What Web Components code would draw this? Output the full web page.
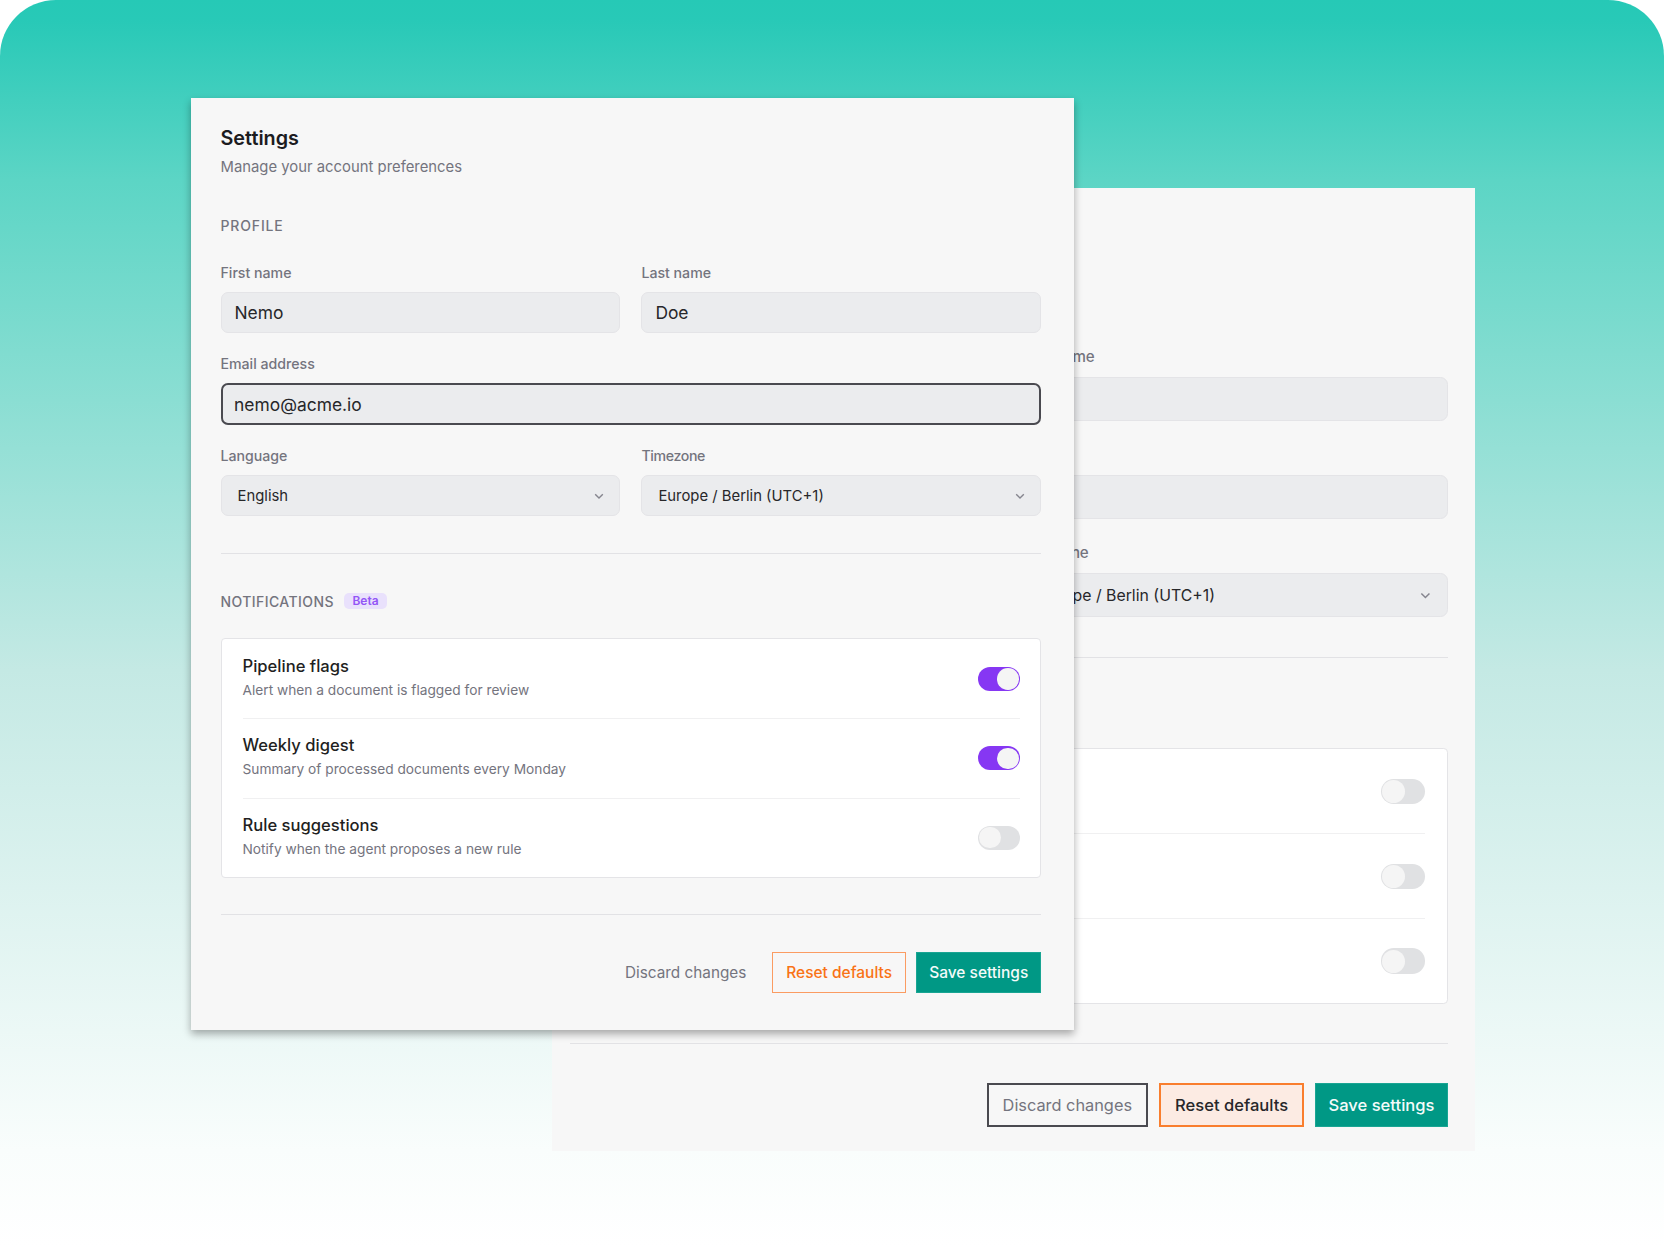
<!DOCTYPE html>
<html lang="en">
<head>
<meta charset="utf-8">
<title>Settings</title>
<style>
  html, body { margin: 0; background: #fff; }
</style>
</head>
<body>
<app-stage></app-stage>

<script>
// shared by every shadow root: --u scales the back panel, same form but larger
const BASE = `
  *, :host { box-sizing: border-box; }
  :host { font-family: Inter, "Liberation Sans", sans-serif; }
`;

class FormField extends HTMLElement {
  connectedCallback() {
    const wide = this.hasAttribute('wide');
    const select = this.hasAttribute('select');
    const focused = this.hasAttribute('focused');
    this.attachShadow({ mode: 'open' });
    this.shadowRoot.innerHTML = `
      <style>
        ${BASE}
        :host { display: block; ${wide ? 'grid-column: 1 / -1;' : ''} }
        :host([tight]) .label { letter-spacing: -.025em; }
        .label {
          height: calc(20px * var(--u));
          line-height: calc(20.7px * var(--u));
          margin-bottom: calc(9px * var(--u));
          font-size: calc(14.15px * var(--u));
          font-weight: 500;
          color: #74747e;
        }
        .box {
          height: calc(41.3px * var(--u));
          display: flex;
          align-items: center;
          justify-content: space-between;
          background: #ebecee;
          border: 1px solid #e4e4e7;
          border-radius: calc(7px * var(--u));
          padding: 0 calc(13px * var(--u));
          color: #27272a;
          font-size: calc(17.4px * var(--u));
        }
        .box.select {
          padding: calc(1px * var(--u)) calc(14.5px * var(--u)) 0 calc(16px * var(--u));
          font-size: calc(14.85px * var(--u));
        }
        .box.focused { border: 2px solid #4a4a50; padding: calc(1px * var(--u)) calc(11.6px * var(--u)) 0; }
        svg { width: calc(12px * var(--u)); height: calc(12px * var(--u)); flex: none; }
      </style>
      <div class="label">${this.getAttribute('label') || ''}</div>
      <div class="box ${select ? 'select' : ''} ${focused ? 'focused' : ''}">
        <span>${this.getAttribute('value') || ''}</span>
        ${select ? '<svg viewBox="0 0 12 12" fill="none" stroke="#85858e" stroke-width="1.4"><path d="M2.2 4.2 6 8l3.8-3.8"/></svg>' : ''}
      </div>
    `;
  }
}

class ToggleSwitch extends HTMLElement {
  connectedCallback() {
    const on = this.hasAttribute('on');
    this.attachShadow({ mode: 'open' });
    this.shadowRoot.innerHTML = `
      <style>
        ${BASE}
        :host { display: block; flex: none; }
        .track {
          width: calc(42px * var(--u));
          height: calc(24px * var(--u));
          border-radius: calc(12px * var(--u));
          padding: calc(1.2px * var(--u));
          display: flex;
          justify-content: ${on ? 'flex-end' : 'flex-start'};
          background: ${on ? '#8637f3' : '#e0e1e3'};
        }
        .knob {
          width: calc(21.6px * var(--u));
          height: calc(21.6px * var(--u));
          border-radius: 50%;
          background: #f5f5f5;
        }
      </style>
      <div class="track"><div class="knob"></div></div>
    `;
  }
}

class ToggleRow extends HTMLElement {
  connectedCallback() {
    this.attachShadow({ mode: 'open' });
    this.shadowRoot.innerHTML = `
      <style>
        ${BASE}
        :host {
          display: flex;
          align-items: center;
          justify-content: space-between;
          height: calc(79.6px * var(--u));
          border-bottom: calc(1.3px * var(--u)) solid #f0f0f1;
        }
        :host(:last-child) { border-bottom: 0; height: calc(78px * var(--u)); }
        .copy { margin-top: calc(-2px * var(--u)); }
        .title {
          height: calc(21px * var(--u));
          line-height: calc(21px * var(--u));
          margin-bottom: calc(3px * var(--u));
          font-size: calc(16.6px * var(--u));
          font-weight: 500;
          color: #1f1f22;
        }
        .hint {
          height: calc(20px * var(--u));
          line-height: calc(20px * var(--u));
          font-size: calc(13.72px * var(--u));
          color: #74747e;
        }
      </style>
      <div class="copy">
        <div class="title">${this.getAttribute('heading') || ''}</div>
        <div class="hint">${this.getAttribute('hint') || ''}</div>
      </div>
      <slot></slot>
    `;
  }
}

class ActionButton extends HTMLElement {
  connectedCallback() {
    this.attachShadow({ mode: 'open' });
    this.shadowRoot.innerHTML = `
      <style>
        ${BASE}
        :host {
          display: flex;
          align-items: center;
          height: calc(41.3px * var(--u));
          padding: 0 calc(11.7px * var(--u));
          border: 1px solid transparent;
          font-size: calc(15.5px * var(--u));
          font-weight: 500;
        }
        :host([kind="ghost"]) { color: #74747e; font-size: calc(15.3px * var(--u)); font-weight: 400; padding: 0 calc(14.5px * var(--u)); }
        :host([kind="outline"]) { color: #f97316; border-color: #fb9c62; padding: 0 calc(12.8px * var(--u)); }
        :host([kind="primary"]) { color: #f4fbfa; background: #009885; border-color: #19a593; }
        :host([kind="ghost-hover"]) { color: #74747e; font-size: calc(15.3px * var(--u)); font-weight: 400; border: 2px solid #4a4a50; padding: 0 calc(13.2px * var(--u)); }
        :host([kind="outline-hover"]) { color: #27272a; background: #fcebe3; border: 2px solid #f97e2e; padding: 0 calc(12.8px * var(--u)); }
      </style>
      <slot></slot>
    `;
  }
}

class SettingsPanel extends HTMLElement {
  connectedCallback() {
    const back = this.getAttribute('variant') === 'back';
    // the back panel's left part lies under the front one: only what shows gets text
    const shown = (text) => (back ? '' : text);
    this.attachShadow({ mode: 'open' });
    this.shadowRoot.innerHTML = `
      <style>
        ${BASE}
        :host {
          display: flex;
          flex-direction: column;
          background: #f7f7f7;
          --u: 1;
          padding: 28.2px 33px 37.2px 30px;
        }
        :host([variant="back"]) {
          --u: 1.068;
          padding: 12.4px 26.6px 23.5px 18px;
        }
        :host([variant="front"]) {
          box-shadow: 0 4px 8px rgba(0, 0, 0, .33);
        }
        h1 {
          margin: 0;
          height: calc(24px * var(--u));
          line-height: calc(24px * var(--u));
          font-size: calc(19.8px * var(--u));
          font-weight: 600;
          color: #1c1c1f;
        }
        .sub {
          margin-top: calc(6.6px * var(--u));
          height: calc(20px * var(--u));
          line-height: calc(20px * var(--u));
          font-size: calc(14.85px * var(--u));
          color: #74747e;
        }
        .section {
          display: flex;
          align-items: center;
          gap: calc(10px * var(--u));
          height: calc(20px * var(--u));
          font-size: calc(14px * var(--u));
          font-weight: 500;
          letter-spacing: .03em;
          color: #74747e;
        }
        .profile {
          margin-top: calc(39.4px * var(--u));
          margin-bottom: calc(26.7px * var(--u));
          letter-spacing: .06em;
        }
        .grid {
          display: grid;
          grid-template-columns: 1fr 1fr;
          column-gap: calc(21.3px * var(--u));
          row-gap: calc(21.3px * var(--u));
        }
        hr {
          width: 100%;
          margin: calc(37px * var(--u)) 0;
          border: 0;
          border-top: calc(1.3px * var(--u)) solid #e2e2e5;
        }
        hr.last { margin: calc(36.4px * var(--u)) 0 calc(36.8px * var(--u)); }
        :host([variant="back"]) hr:not(.last) { margin-top: 40.6px; }
        .badge {
          padding: 0 calc(8.5px * var(--u));
          height: calc(16.6px * var(--u));
          line-height: calc(16.6px * var(--u));
          border-radius: calc(5px * var(--u));
          background: #e9e1fc;
          color: #9356f6;
          font-size: calc(12px * var(--u));
          font-weight: 600;
          letter-spacing: 0;
        }
        .card {
          margin-top: calc(27.3px * var(--u));
          background: #fff;
          border: calc(1.3px * var(--u)) solid #e4e4e7;
          border-radius: calc(4px * var(--u));
          padding: 0 calc(20.2px * var(--u)) 0 calc(21px * var(--u));
        }
        .actions {
          display: flex;
          justify-content: flex-end;
          gap: calc(10.6px * var(--u));
        }
      </style>
      <h1>${shown('Settings')}</h1>
      <div class="sub">${shown('Manage your account preferences')}</div>
      <div class="section profile">${shown('PROFILE')}</div>
      <div class="grid">
        <form-field label="${shown('First name')}" value="${shown('Nemo')}"></form-field>
        <form-field label="Last name" value="${shown('Doe')}"></form-field>
        <form-field wide label="${shown('Email address')}" value="${shown('nemo@acme.io')}" ${back ? '' : 'focused'}></form-field>
        <form-field select label="${shown('Language')}" value="${shown('English')}"></form-field>
        <form-field select tight label="Timezone" value="Europe / Berlin (UTC+1)"></form-field>
      </div>
      <hr>
      <div class="section">${back ? '' : 'NOTIFICATIONS <span class="badge">Beta</span>'}</div>
      <div class="card">
        <toggle-row heading="${shown('Pipeline flags')}" hint="${shown('Alert when a document is flagged for review')}"><toggle-switch ${back ? '' : 'on'}></toggle-switch></toggle-row>
        <toggle-row heading="${shown('Weekly digest')}" hint="${shown('Summary of processed documents every Monday')}"><toggle-switch ${back ? '' : 'on'}></toggle-switch></toggle-row>
        <toggle-row heading="${shown('Rule suggestions')}" hint="${shown('Notify when the agent proposes a new rule')}"><toggle-switch></toggle-switch></toggle-row>
      </div>
      <hr class="last">
      <div class="actions">
        <action-button kind="${back ? 'ghost-hover' : 'ghost'}">Discard changes</action-button>
        <action-button kind="${back ? 'outline-hover' : 'outline'}">Reset defaults</action-button>
        <action-button kind="primary">Save settings</action-button>
      </div>
    `;
  }
}

class AppStage extends HTMLElement {
  connectedCallback() {
    this.attachShadow({ mode: 'open' });
    this.shadowRoot.innerHTML = `
      <style>
        ${BASE}
        :host {
          display: block;
          position: relative;
          height: 1248px;
          overflow: hidden;
          padding: 187.8px 189.5px 0 552px;
          border-radius: 56px 56px 0 0;
          background: linear-gradient(180deg, #26c9b6 0, #28c9b7 20px, #5cd5c5 180px, #c4e9e4 670px, #f9fdfc 1150px, #ffffff 1248px);
        }
        /* front card sits over the back one */
        .front {
          position: absolute;
          left: 190.5px;
          top: 97.8px;
          width: 883.5px;
        }
      </style>
      <settings-panel variant="back"></settings-panel>
      <settings-panel variant="front" class="front"></settings-panel>
    `;
  }
}

customElements.define('form-field', FormField);
customElements.define('toggle-switch', ToggleSwitch);
customElements.define('toggle-row', ToggleRow);
customElements.define('action-button', ActionButton);
customElements.define('settings-panel', SettingsPanel);
customElements.define('app-stage', AppStage);
</script>
</body>
</html>
